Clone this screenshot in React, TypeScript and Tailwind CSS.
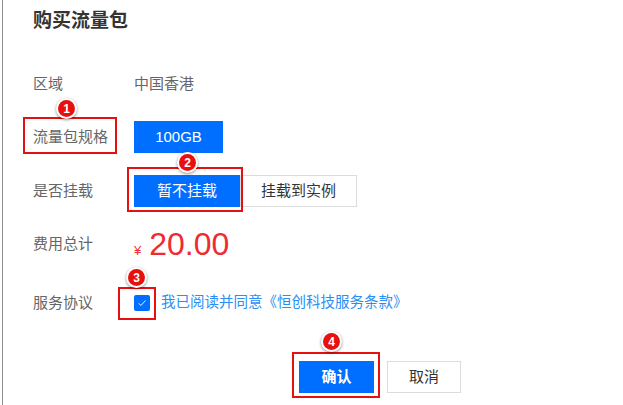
import React from "react";

const font = { fontFamily: '"Liberation Sans", "Noto Sans CJK SC", sans-serif' };

function Badge({ n, left, top }: { n: number; left: string; top: string }) {
  return (
    <div
      className={`absolute ${left} ${top} w-[21px] h-[21px] rounded-full bg-white shadow-[0_1px_3px_rgba(0,0,0,0.45)] flex items-center justify-center`}
    >
      <div className="w-[17px] h-[17px] rounded-full bg-[#e8100f] flex items-center justify-center text-white text-[12px] font-bold leading-none">
        {n}
      </div>
    </div>
  );
}

export default function App() {
  return (
    <div className="relative w-[623px] h-[405px] bg-white overflow-hidden" style={font}>
      <div className="ml-[2px] h-full border-l border-[#8f8f8f] pl-[30px]">
        <div className="pt-[8px] text-[19px] leading-[26px] font-bold text-[#333]">购买流量包</div>

        <div className="mt-[34px] flex items-center h-[32px]">
          <div className="w-[101px] text-[15px] text-[#666]">区域</div>
          <div className="text-[15px] text-[#666]">中国香港</div>
        </div>

        <div className="mt-[21px] flex items-center h-[32px]">
          <div className="w-[101px] text-[15px] text-[#666]">流量包规格</div>
          <div className="w-[89px] h-[32px] bg-[#006eff] text-white text-[15px] flex items-center justify-center">100GB</div>
        </div>

        <div className="mt-[22px] flex items-center h-[32px]">
          <div className="w-[101px] text-[15px] text-[#666]">是否挂载</div>
          <div className="flex">
            <div className="w-[106px] h-[32px] bg-[#006eff] text-white text-[15px] flex items-center justify-center">暂不挂载</div>
            <div className="w-[117px] h-[32px] border border-[#dcdcdc] text-[#333] text-[15px] flex items-center justify-center">挂载到实例</div>
          </div>
        </div>

        <div className="mt-[21px] flex items-center h-[32px]">
          <div className="w-[101px] text-[15px] text-[#666]">费用总计</div>
          <div className="flex items-baseline text-[#ef2b32]">
            <span className="text-[13px] mr-[8px]">¥</span>
            <span className="text-[32px] leading-none">20.00</span>
          </div>
        </div>

        <div className="mt-[27px] flex items-center h-[32px]">
          <div className="w-[101px] text-[15px] text-[#666]">服务协议</div>
          <div className="flex items-center">
            <div className="w-[16px] h-[16px] rounded-[2px] bg-[#006eff] flex items-center justify-center">
              <svg width="10" height="8" viewBox="0 0 10 8">
                <path d="M1.5 4.2 L4 6.5 L8.5 1.5" fill="none" stroke="white" strokeWidth="1" opacity="0.9" />
              </svg>
            </div>
            <span className="ml-[11px] text-[14.5px] text-[#2a8ef5]">我已阅读并同意《恒创科技服务条款》</span>
          </div>
        </div>

        <div className="mt-[42px] flex items-center h-[32px] pl-[266px]">
          <div className="w-[75px] h-[32px] bg-[#006eff] text-white text-[15px] font-bold flex items-center justify-center">确认</div>
          <div className="ml-[13px] w-[74px] h-[32px] border border-[#dcdcdc] text-[#333] text-[15px] flex items-center justify-center">取消</div>
        </div>
      </div>

      {/* annotation boxes */}
      <div className="absolute left-[23px] top-[117px] w-[94px] h-[37px] border-2 border-[#e8100f]" />
      <div className="absolute left-[127px] top-[167px] w-[116px] h-[45px] border-2 border-[#e8100f]" />
      <div className="absolute left-[118px] top-[287px] w-[38px] h-[33px] border-2 border-[#e8100f]" />
      <div className="absolute left-[292px] top-[352px] w-[88px] h-[46px] border-2 border-[#e8100f]" />

      <Badge n={1} left="left-[56px]" top="top-[98px]" />
      <Badge n={2} left="left-[177px]" top="top-[152px]" />
      <Badge n={3} left="left-[126px]" top="top-[267px]" />
      <Badge n={4} left="left-[321px]" top="top-[331px]" />
    </div>
  );
}
